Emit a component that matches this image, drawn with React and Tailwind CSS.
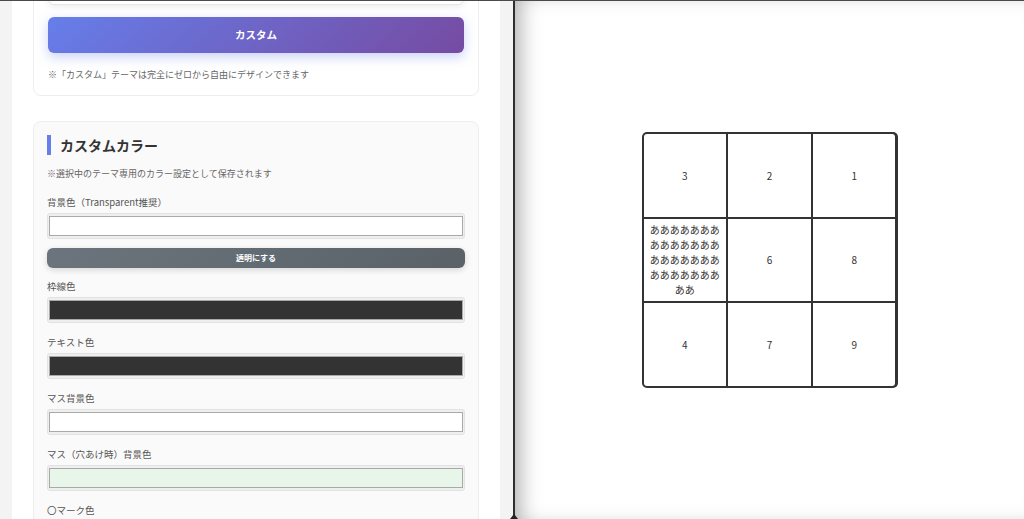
import React from "react";

const FONT = {
  fontFamily: '"Noto Sans CJK JP", "Noto Sans", "Liberation Sans", sans-serif',
};

/* color swatch like a native <input type="color"> */
function Swatch({ color }) {
  return (
    <div className="h-[26px] rounded-[3px] border border-[#e2e2e2] bg-[#efefef] px-[1px] py-[2px]">
      <div
        className="h-full w-full border border-[#a9a9a9]"
        style={{ background: color }}
      />
    </div>
  );
}

function ColorField({ label, color }) {
  return (
    <div className="mb-[12px]">
      <div className="h-[14px] text-[9.5px] leading-[14px] text-[#555]">{label}</div>
      <div className="mt-[4px]">
        <Swatch color={color} />
      </div>
    </div>
  );
}

const cells = ["3", "2", "1", "あ".repeat(30), "6", "8", "4", "7", "9"];

export default function App() {
  return (
    <div
      className="flex h-[519px] w-[1024px] overflow-hidden border-t border-[#4a4a4a] bg-white"
      style={FONT}
    >
      {/* ================= LEFT PANEL ================= */}
      <div className="h-full w-[513px] shrink-0 overflow-hidden bg-[#f3f3f3] pl-[12px] pr-[13px]">
        <div className="h-full overflow-hidden bg-white px-[21px]">
          {/* theme card (scrolled) */}
          <div className="-mt-[47px] rounded-[8px] border border-[#eeeeee] bg-white px-[14px] pt-[14px] pb-[13px]">
            <div className="h-[36px] rounded-[6px] border border-[#e6e6e6] bg-white shadow-[0_2px_6px_rgba(0,0,0,0.08)]" />
            <button className="mt-[12px] flex h-[36px] w-full items-center justify-center rounded-[6px] bg-[linear-gradient(135deg,#667eea_0%,#764ba2_100%)] text-[10.5px] font-bold text-white shadow-[0_4px_12px_rgba(102,126,234,0.35)]">
              カスタム
            </button>
            <p className="mt-[15px] text-[9px] leading-[14px] text-[#666]">
              ※「カスタム」テーマは完全にゼロから自由にデザインできます
            </p>
          </div>

          {/* custom colors card */}
          <div className="mt-[25px] rounded-[8px] border border-[#eeeeee] bg-[#fafafa] px-[13px] pt-[13px] pb-[40px]">
            <div className="flex h-[20px] items-center border-l-[4px] border-[#667eea] pl-[9px]">
              <h2 className="text-[14px] font-bold text-[#333]">カスタムカラー</h2>
            </div>
            <p className="mt-[12px] text-[9px] leading-[14px] text-[#666]">
              ※選択中のテーマ専用のカラー設定として保存されます
            </p>

            <div className="mt-[14px]">
              <div className="mb-[9px]">
                <div className="h-[14px] text-[9.5px] leading-[14px] text-[#555]">
                  背景色（Transparent推奨）
                </div>
                <div className="mt-[4px]">
                  <Swatch color="#ffffff" />
                </div>
                <button className="mt-[9px] flex h-[20px] w-full items-center justify-center rounded-[6px] bg-[linear-gradient(135deg,#6c757d_0%,#5a6268_100%)] text-[8px] font-bold text-white shadow-[0_2px_6px_rgba(0,0,0,0.15)]">
                  透明にする
                </button>
              </div>
              <div className="pt-[2px]">
                <ColorField label="枠線色" color="#333333" />
                <ColorField label="テキスト色" color="#333333" />
                <ColorField label="マス背景色" color="#ffffff" />
                <ColorField label="マス（穴あけ時）背景色" color="#e8f5e9" />
                <div className="h-[14px] text-[9.5px] leading-[14px] text-[#555]">〇マーク色</div>
                <div className="mt-[4px]">
                  <Swatch color="#e53935" />
                </div>
              </div>
            </div>
          </div>
        </div>
      </div>

      {/* divider */}
      <div className="relative w-[2px] shrink-0 bg-[#2e2e2e]">
        <div className="absolute bottom-0 left-[-3px] h-0 w-0 border-x-[4px] border-b-[5px] border-x-transparent border-b-[#222]" />
      </div>

      {/* ================= PREVIEW ================= */}
      <div className="flex flex-1 items-center justify-center bg-white shadow-[inset_14px_0_22px_-10px_rgba(0,0,0,0.35)]">
        <div className="grid h-[256px] w-[256px] grid-cols-3 grid-rows-3 gap-[2px] rounded-[5px] bg-[#333] p-[2px]">
          {cells.map((c, i) => (
            <div
              key={i}
              className={
                "flex min-h-0 min-w-0 items-center justify-center bg-white px-[5px] text-center text-[10px] leading-[15px] text-[#333] break-all " +
                (i === 0 ? "rounded-tl-[3px] " : "") +
                (i === 2 ? "rounded-tr-[3px] " : "") +
                (i === 6 ? "rounded-bl-[3px] " : "") +
                (i === 8 ? "rounded-br-[3px]" : "")
              }
            >
              {c}
            </div>
          ))}
        </div>
      </div>
    </div>
  );
}
